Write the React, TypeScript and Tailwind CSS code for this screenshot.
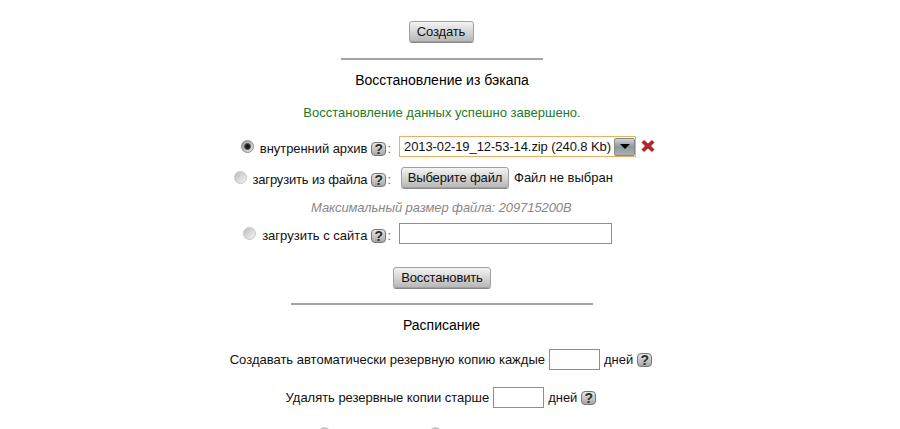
const font = "font-['Liberation_Sans',Arial,sans-serif]";

function Help() {
    return (
        <span className="inline-flex h-[14px] w-[15px] items-center justify-center rounded-[4px] border border-[#777] bg-gradient-to-b from-[#e6e6e6] to-[#a8a8a8] text-[14px] leading-none font-bold text-[#2e2e2e]">
            ?
        </span>
    );
}

function Radio({ checked = false }: { checked?: boolean }) {
    if (checked) {
        return (
            <span className="inline-flex size-[13px] items-center justify-center rounded-full border border-[#8a8a8a] bg-gradient-to-br from-[#9a9a9a] to-[#e8e8e8]">
                <span className="size-[7px] rounded-full border border-[#555] bg-[#1c1c1c]" />
            </span>
        );
    }
    return (
        <span className="inline-flex size-[13px] rounded-full border border-[#c4c4c4] bg-gradient-to-br from-[#bcbcbc] to-[#f6f6f6]" />
    );
}

function GrayButton({ children, className = "" }: { children: React.ReactNode; className?: string }) {
    return (
        <div className={`flex h-[21px] items-center justify-center rounded-[3px] border border-[#a0a0a0] bg-gradient-to-b from-[#f4f4f4] to-[#b8b8b8] text-[13px] tracking-[-0.15px] text-[#111] shadow-[0_1px_0_#8a8a8a] ${className}`}>
            {children}
        </div>
    );
}

function TextBox({ className = "" }: { className?: string }) {
    return <div className={`h-[21px] border border-[#64a09c] bg-white ${className}`} />;
}

function OptionRow({ label, top, checked = false, labelClass = "", children }: { label: string; top: string; checked?: boolean; labelClass?: string; children: React.ReactNode }) {
    return (
        <div className={`flex h-[21px] items-center ${top}`}>
            <div className="flex w-[399px] items-center justify-end pr-[8px]">
                <Radio checked={checked} />
                <div className="mt-[4px] flex items-center">
                    <span className={`ml-[6px] ${labelClass}`}>{label}</span>
                    <span className="mr-[1px] ml-[4px] flex"><Help /></span>
                    <span className="text-[#666]">:</span>
                </div>
            </div>
            {children}
        </div>
    );
}

export default function App() {
    return (
        <div className={`h-[429px] w-[900px] overflow-hidden bg-white text-[13px] text-[#111] ${font}`}>
            <div className="flex w-[884px] flex-col items-center pt-[21px]">
                <GrayButton className="mr-[2px] w-[65px]">Создать</GrayButton>
                <div className="mt-[16px] h-[2px] w-[202px] bg-[#a3a3a3]" />
                <div className="mt-[12px] text-[14px] leading-[16px] text-black">Восстановление из бэкапа</div>
                <div className="mt-[18px] leading-[14px] text-[#1d7a28]">Восстановление данных успешно завершено.</div>

                <div className="w-full">
                    <OptionRow label="внутренний архив" top="mt-[16px]" labelClass="tracking-[-0.06px]" checked>
                        <div className="flex h-[21px] w-[237px] items-center border border-[#e8b060] bg-white pl-[4px]">
                            <span className="flex-1 tracking-[-0.1px] whitespace-nowrap">2013-02-19_12-53-14.zip (240.8 Kb)</span>
                            <span className="flex h-[18px] w-[21px] items-center justify-center rounded-[2px] border border-[#888] bg-gradient-to-b from-[#cdd5d9] via-[#8f989d] to-[#a9b1b5]">
                                <span className="size-0 border-x-[5px] border-t-[5px] border-x-transparent border-t-black" />
                            </span>
                        </div>
                        <svg className="mb-[2px] ml-[5px]" width="14" height="14" viewBox="0 0 14 14">
                            <path d="M3 1 7 4.500 11 1l2.500 2.500L10 7l3.500 3.500L11 13 7 9.500 3 13 .5 10.500 4 7 .5 3.500z" fill="#b3262c" />
                        </svg>
                    </OptionRow>
                    <OptionRow label="загрузить из файла" top="mt-[10px]" labelClass="tracking-[-0.17px]">
                        <GrayButton className="ml-[2px] w-[108px]">Выберите файл</GrayButton>
                        <span className="ml-[5px]">Файл не выбран</span>
                    </OptionRow>
                    <div className="mt-[13px] ml-[311px] leading-[14px] tracking-[-0.08px] text-[#888] italic">Максимальный размер файла: 209715200B</div>
                    <OptionRow label="загрузить с сайта" top="mt-[8px]">
                        <TextBox className="w-[213px]" />
                    </OptionRow>
                </div>

                <GrayButton className="mt-[23px] w-[98px]">Восстановить</GrayButton>
                <div className="mt-[15px] h-[2px] w-[302px] bg-[#a3a3a3]" />
                <div className="mt-[12px] mr-[1px] text-[14px] leading-[16px] text-black">Расписание</div>
                <div className="mt-[16px] mr-[2px] flex h-[21px] items-center">
                    <span>Создавать автоматически резервную копию каждые</span>
                    <TextBox className="mx-[4px] w-[51px]" />
                    <span className="mr-[4px]">дней</span>
                    <Help />
                </div>
                <div className="mt-[17px] mr-[2px] flex h-[21px] items-center">
                    <span className="tracking-[-0.03px]">Удалять резервные копии старше</span>
                    <TextBox className="mx-[4px] w-[51px]" />
                    <span className="mr-[4px]">дней</span>
                    <Help />
                </div>
                <div className="mt-[19px] flex w-full pl-[318px]">
                    <Radio />
                    <span className="ml-[98px] flex"><Radio /></span>
                </div>
            </div>
        </div>
    );
}
